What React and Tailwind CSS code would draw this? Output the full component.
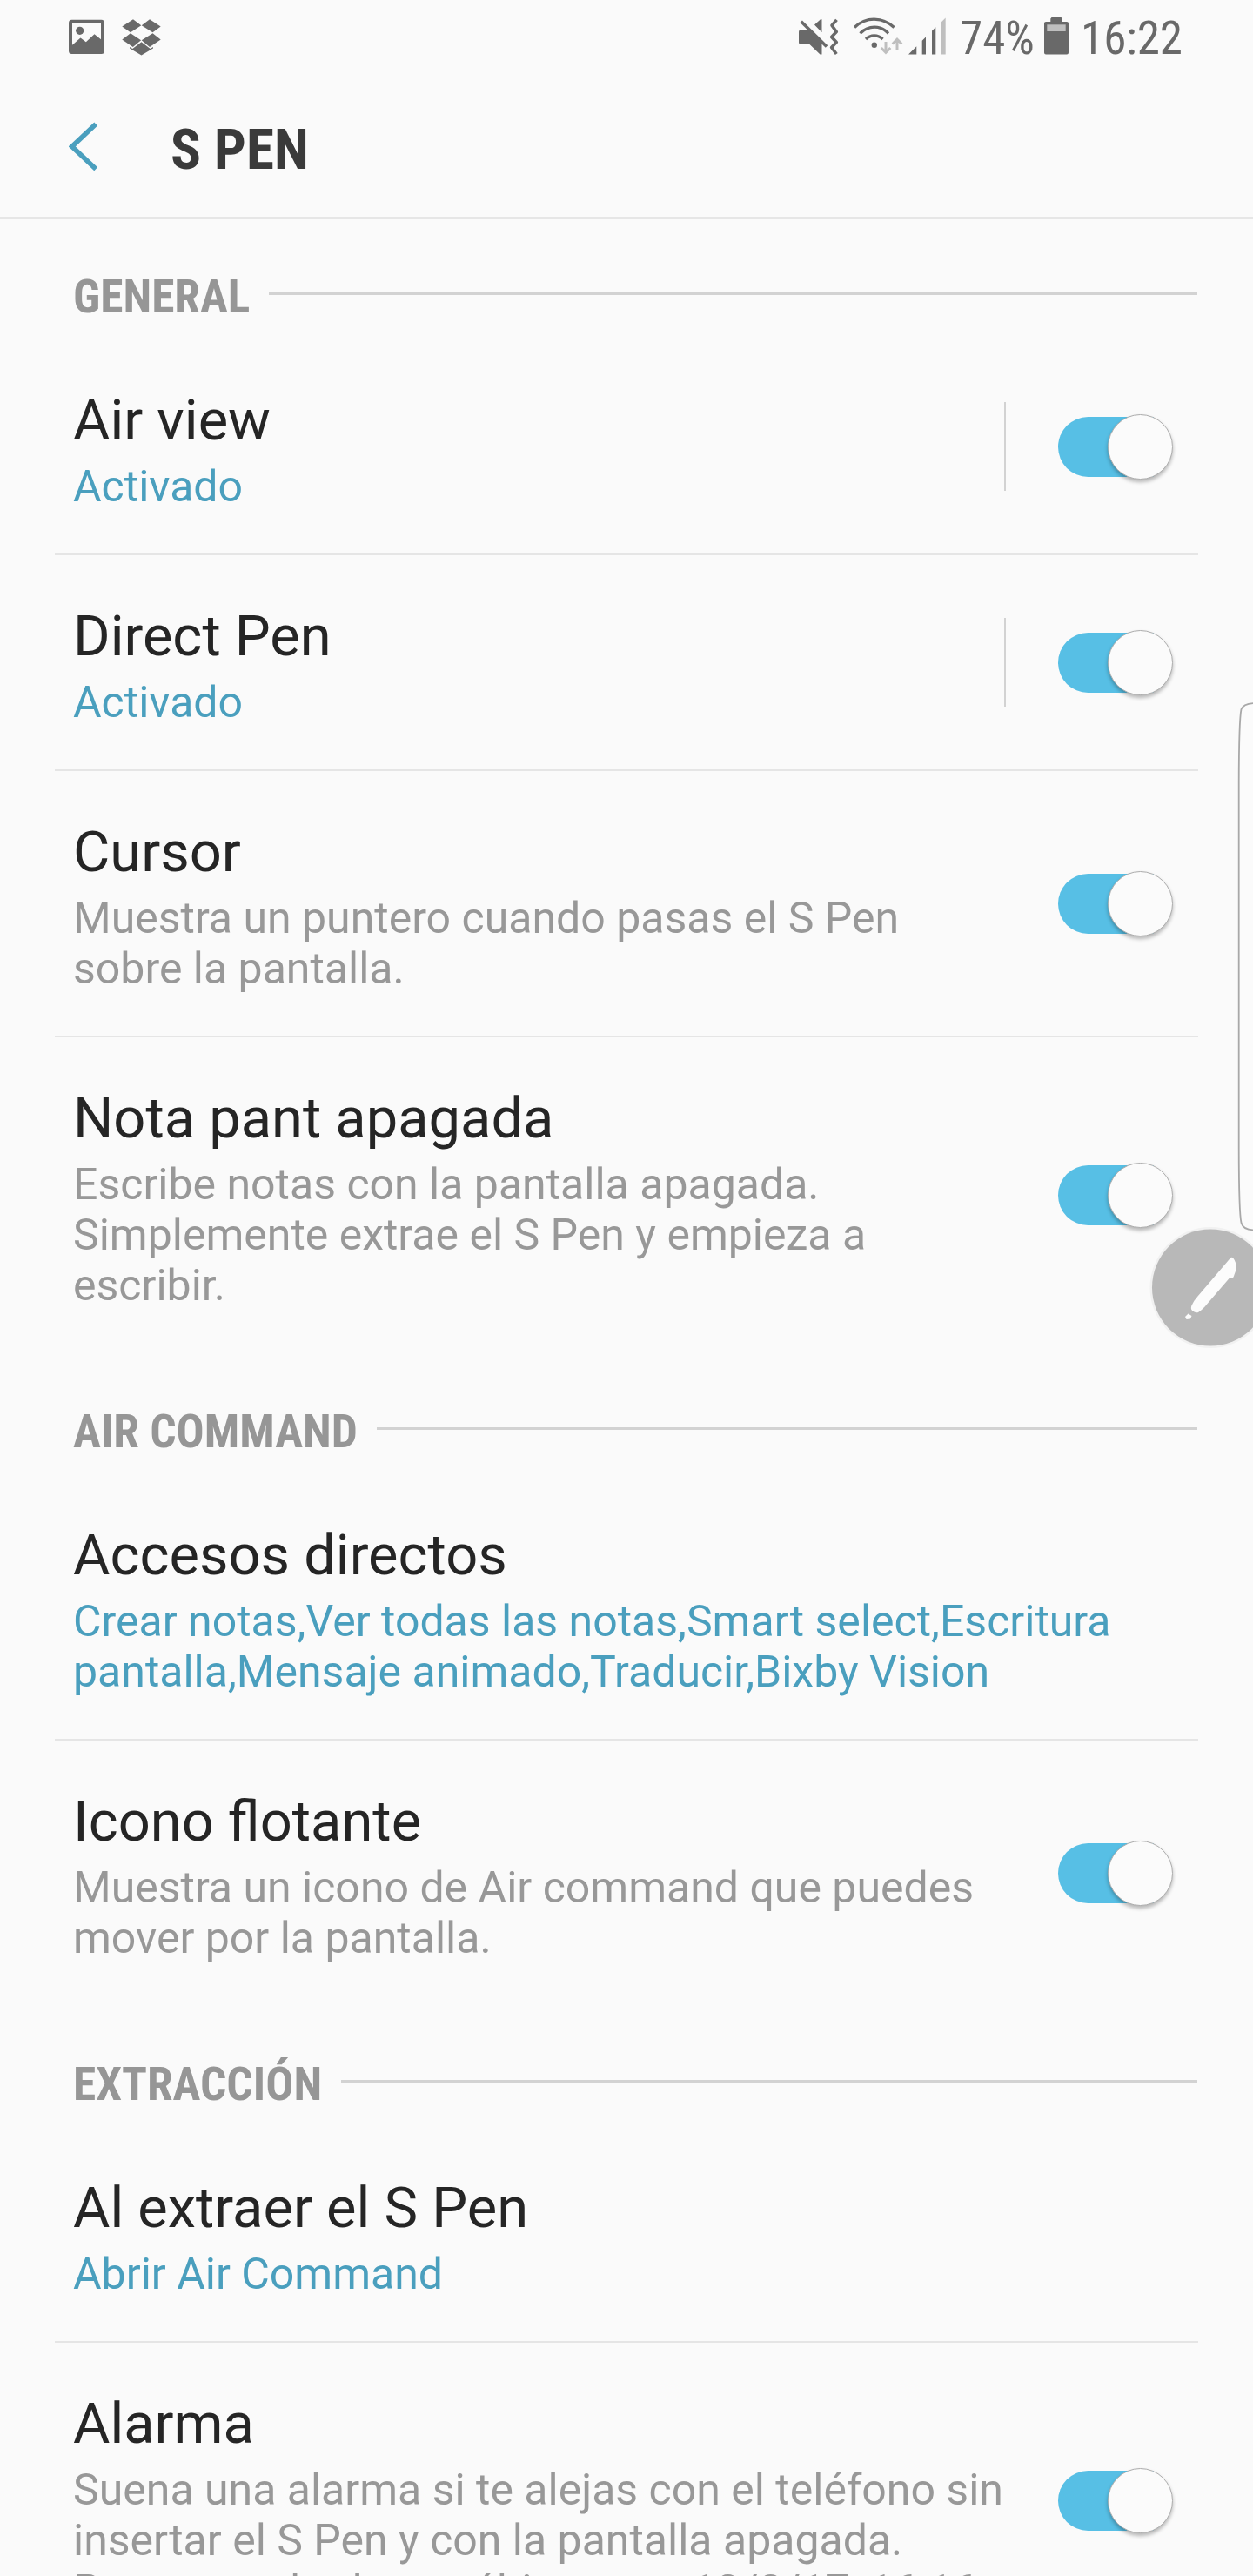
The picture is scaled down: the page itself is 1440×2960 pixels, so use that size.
import clsx from "clsx";

const SECTIONS = [
  {
    title: "GENERAL",
    items: [
      { title: "Air view", summary: "Activado", isAccent: true, hasSwitch: true, isSplit: true },
      { title: "Direct Pen", summary: "Activado", isAccent: true, hasSwitch: true, isSplit: true },
      {
        title: "Cursor",
        summary: "Muestra un puntero cuando pasas el S Pen sobre la pantalla.",
        hasSwitch: true,
      },
      {
        title: "Nota pant apagada",
        summary:
          "Escribe notas con la pantalla apagada. Simplemente extrae el S Pen y empieza a escribir.",
        hasSwitch: true,
      },
    ],
  },
  {
    title: "AIR COMMAND",
    items: [
      {
        title: "Accesos directos",
        summary:
          "Crear notas,Ver todas las notas,Smart select,Escritura pantalla,Mensaje animado,Traducir,Bixby Vision",
        isAccent: true,
      },
      {
        title: "Icono flotante",
        summary: "Muestra un icono de Air command que puedes mover por la pantalla.",
        hasSwitch: true,
      },
    ],
  },
  {
    title: "EXTRACCIÓN",
    items: [
      { title: "Al extraer el S Pen", summary: "Abrir Air Command", isAccent: true },
      {
        title: "Alarma",
        summary:
          "Suena una alarma si te alejas con el teléfono sin insertar el S Pen y con la pantalla apagada.\nPen encuadrado por última vez: 12/8/17, 16:16",
        hasSwitch: true,
      },
    ],
  },
];

function NotificationIcons() {
  return (
    <svg className="h-[46px] w-[108px]" viewBox="79 20 108 46" fill="#696969" aria-hidden="true">
      <path
        fillRule="evenodd"
        d="M82.500 22.700h34q3.500 0 3.500 3.500v32.300q0 3.500-3.500 3.500h-34q-3.500 0-3.500-3.500v-32.300q0-3.500 3.500-3.500zM83 27v24.800l9.500-8.200 6.300 4.600 9.700-9 7.500 6V27z"
      />
      <circle cx="91.700" cy="35.300" r="4.600" />
      <path d="M153 22.300l9.300 7-12.300 8-9.700-6.800zM172 22.300l12.700 8.200-9.200 6.800-12.800-8zM150 38.300l12.100 8-9.300 7.600-12.500-8.500zM175.500 38.300l9.200 7.100-12.700 8.500-9.300-7.600z" />
      <path d="M162.500 48.300l10.200 7.800 3.300-2.200v1.700l-13.500 7.900-13.500-7.900v-1.700l3.300 2.200z" />
    </svg>
  );
}

function ConnectivityIcons() {
  return (
    <svg className="h-[48px] w-[172px]" viewBox="917 18 172 48" fill="none" aria-hidden="true">
      {/* muted, vibrating */}
      <path
        fill="#696969"
        d="M920.500 34.300h8.500l15.500 15.500v12.700h-2l-12-11.500h-10q-2.500 0-2.500-2.500v-11.700q0-2.500 2.500-2.500zM943 22.300h1.500v15l-8.500-8.700z"
      />
      <path stroke="#696969" strokeWidth="3.600" d="M920.700 24.700l29.300 28.800" />
      <path
        stroke="#696969"
        strokeWidth="3.600"
        strokeLinejoin="round"
        d="M961.500 22.800l-5.500 6.400 5.300 7.300-5.700 6 5.700 6-5.700 6 5.700 7.500"
      />
      {/* wifi */}
      <g stroke="#696969" strokeWidth="3.300">
        <path d="M982 31.500C995 19 1014 19 1027.500 31.500" />
        <path d="M988.500 38.300C998 28.800 1012 28.800 1021 38.300" />
        <path d="M995 45C1000.500 39.500 1009 39.500 1014.500 45" />
      </g>
      <circle cx="1004.800" cy="51.700" r="3.200" fill="#696969" />
      <path
        stroke="#bfbfbf"
        strokeWidth="3"
        d="M1018 48v12M1012.700 55l5.300 5.300 5.300-5.300M1031 57.500v-12M1025.700 50.500l5.300-5.300 5.300 5.300"
      />
      {/* signal strength */}
      <path
        fill="#696969"
        d="M1044 62.500h9.300v-9.300zM1059.700 62.500h4.300v-20l-4.300 4.300zM1071 62.500h4.300v-31.200l-4.300 4.200z"
      />
      <path fill="#bfbfbf" d="M1081.700 62.500h5v-42l-5 5z" />
    </svg>
  );
}

function StatusBar() {
  return (
    <div className="flex h-[86px] items-start justify-between pl-[79px] pr-[81px] font-['Roboto_Condensed'] text-[53px] leading-[88px] text-[#696969]">
      <div className="mt-5">
        <NotificationIcons />
      </div>
      <div className="flex items-start">
        <div className="mt-[18px]">
          <ConnectivityIcons />
        </div>
        <span className="ml-[14px] w-[97px]">74%</span>
        <svg className="mt-5 h-[43px] w-[28px]" viewBox="0 0 28 43" aria-hidden="true">
          <path
            fill="#696969"
            d="M8.500 0h11l1.500 1.500V5h5q2 0 2 2v33.500q0 2-2 2H2q-2 0-2-2V7q0-2 2-2h5.300V1.500z"
          />
          <path fill="#bfbfbf" d="M3.300 8.300h21.400v7.700H3.300z" />
        </svg>
        <span className="ml-[14px] w-[117px] whitespace-nowrap">16:22</span>
      </div>
    </div>
  );
}

function TitleBar() {
  return (
    <header className="flex h-[166px] items-start border-b-[3px] border-[#e6e6e6] pl-[79px]">
      <svg className="mt-[54px] h-[57px] w-[34px]" viewBox="0 0 34 57" aria-hidden="true">
        <path d="M31.200 2.500L3.700 28.400l27.500 25.900" fill="none" stroke="#4a9fbe" strokeWidth="5.600" />
      </svg>
      <h1 className="ml-[83px] mt-[42px] font-['Roboto_Condensed'] text-[65px] font-bold leading-[88px] text-[#3a3a3a]">
        S PEN
      </h1>
    </header>
  );
}

function Switch() {
  return (
    <button
      type="button"
      role="switch"
      aria-checked="true"
      className="mr-[30px] flex h-[75px] w-[131px] shrink-0 items-center"
    >
      <span className="flex h-[69px] w-[110px] items-center rounded-l-full bg-[#57bfe5]">
        <span className="ml-[57px] size-[75px] shrink-0 rounded-full border border-[#adadad] bg-[#fbfbfb] shadow-[0_3px_4px_rgb(0_0_0/0.28)]" />
      </span>
    </button>
  );
}

function SettingRow({ item, isLast }) {
  return (
    <li
      className={clsx(
        "ml-[63px] flex w-[1314px] items-center pl-[21px]",
        !isLast && "border-b-2 border-[#e5e5e5]",
      )}
    >
      <div
        className={clsx(
          "shrink-0 pb-12 pt-[46px]",
          item.isSplit && "w-[1070px]",
          item.hasSwitch && !item.isSplit && "w-[1080px]",
          !item.hasSwitch && "w-[1240px]",
        )}
      >
        <h3 className="text-[65px] leading-[94px] text-[#252525]">{item.title}</h3>
        <p
          className={clsx(
            "whitespace-pre-line text-[50px] leading-[58px]",
            item.isAccent ? "text-[#4a9fbe]" : "text-[#989898]",
          )}
        >
          {item.summary}
        </p>
      </div>
      {item.isSplit && <span className="h-[102px] w-[2px] shrink-0 bg-[#d2d2d2]" />}
      {item.hasSwitch && (
        <div className="ml-auto">
          <Switch />
        </div>
      )}
    </li>
  );
}

function Section({ section, isFirst }) {
  return (
    <section className={clsx(isFirst && "-mt-[2px]")}>
      <div className="flex h-[140px] items-start pl-[84px] pr-16">
        <h2 className="mt-[61px] font-['Roboto_Condensed'] text-[53.4px] font-bold leading-[60px] text-[#969696]">
          {section.title}
        </h2>
        <span className="ml-[22px] mt-[86px] h-[3px] flex-1 bg-[#d2d2d2]" />
      </div>
      <ul>
        {section.items.map((item, index) => (
          <SettingRow
            key={item.title}
            item={item}
            isLast={index === section.items.length - 1}
          />
        ))}
      </ul>
    </section>
  );
}

// Edge panel handle and the Air command bubble, both cut by the screen edge
function FloatingControls() {
  return (
    <>
      <svg
        className="absolute right-0 top-[800px] h-[620px] w-[20px]"
        viewBox="1420 800 20 620"
        aria-hidden="true"
      >
        <path
          d="M1441 808C1433 808.500 1428 811 1426.500 815C1424.200 826 1423.800 860 1423.700 900V1320C1423.800 1370 1424.200 1395 1426.500 1405C1428 1411 1433 1413.300 1441 1413.300"
          fill="#fbfbfb"
          stroke="#a8a8a8"
          strokeWidth="1.800"
        />
      </svg>
      <svg
        className="absolute right-0 top-[1400px] h-[160px] w-[120px]"
        viewBox="1320 1400 120 160"
        aria-hidden="true"
      >
        <circle cx="1391" cy="1479.500" r="69.500" fill="#f1f1f1" />
        <circle cx="1391" cy="1479.500" r="67" fill="#b8b8b8" />
        <path
          fill="#fcfcfc"
          d="M1414.500 1445Q1416 1444 1417.500 1446Q1420.500 1450 1420.700 1456Q1420.500 1461 1417.500 1467.500Q1416.500 1469 1413 1468.500L1388 1497.500Q1382 1505 1377 1508Q1374 1509 1370.500 1506.300Q1368 1504.500 1369.300 1500.500Q1371.500 1495 1376.500 1489.500zM1365.500 1509.500l4 2.500-1.500 3.500-4.500.5-1.500-3z"
        />
      </svg>
    </>
  );
}

export default function App() {
  return (
    <div className="relative h-[2960px] w-[1440px] overflow-hidden bg-[#fafafa] font-['Roboto',sans-serif]">
      <StatusBar />
      <TitleBar />
      <main>
        {SECTIONS.map((section, index) => (
          <Section key={section.title} section={section} isFirst={index === 0} />
        ))}
      </main>
      <FloatingControls />
    </div>
  );
}
